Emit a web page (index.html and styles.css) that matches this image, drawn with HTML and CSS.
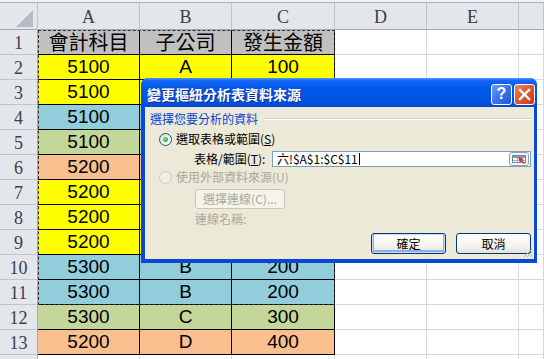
FILE: index.html
```html
<!DOCTYPE html>
<html>
<head>
<meta charset="utf-8">
<link rel="stylesheet" href="styles.css">
</head>
<body>
<div class="sheet">
  <div class="strip"></div>
  <div class="grid">
    <div class="corner"><svg width="38" height="27" viewBox="0 0 38 27"><polygon points="33,7 33,24 16,24" fill="#B7BBC1"/></svg></div>
    <div class="ch">A</div><div class="ch">B</div><div class="ch">C</div><div class="ch">D</div><div class="ch">E</div><div class="ch"></div>

    <div class="rh">1</div><div class="d h cjk">會計科目</div><div class="d h cjk">子公司</div><div class="d h cjk">發生金額</div><div class="c"></div><div class="c"></div><div class="c"></div>
    <div class="rh">2</div><div class="d y">5100</div><div class="d y">A</div><div class="d y">100</div><div class="c"></div><div class="c"></div><div class="c"></div>
    <div class="rh">3</div><div class="d y">5100</div><div class="d y"></div><div class="d y"></div><div class="c"></div><div class="c"></div><div class="c"></div>
    <div class="rh">4</div><div class="d b">5100</div><div class="d b"></div><div class="d b"></div><div class="c"></div><div class="c"></div><div class="c"></div>
    <div class="rh">5</div><div class="d g">5100</div><div class="d g"></div><div class="d g"></div><div class="c"></div><div class="c"></div><div class="c"></div>
    <div class="rh">6</div><div class="d o">5200</div><div class="d o"></div><div class="d o"></div><div class="c"></div><div class="c"></div><div class="c"></div>
    <div class="rh">7</div><div class="d y">5200</div><div class="d y"></div><div class="d y"></div><div class="c"></div><div class="c"></div><div class="c"></div>
    <div class="rh">8</div><div class="d y">5200</div><div class="d y"></div><div class="d y"></div><div class="c"></div><div class="c"></div><div class="c"></div>
    <div class="rh">9</div><div class="d y">5200</div><div class="d y"></div><div class="d y"></div><div class="c"></div><div class="c"></div><div class="c"></div>
    <div class="rh">10</div><div class="d b">5300</div><div class="d b">B</div><div class="d b">200</div><div class="c"></div><div class="c"></div><div class="c"></div>
    <div class="rh">11</div><div class="d b">5300</div><div class="d b">B</div><div class="d b">200</div><div class="c"></div><div class="c"></div><div class="c"></div>
    <div class="rh">12</div><div class="d g">5300</div><div class="d g">C</div><div class="d g">300</div><div class="c"></div><div class="c"></div><div class="c"></div>
    <div class="rh">13</div><div class="d o">5200</div><div class="d o">D</div><div class="d o">400</div><div class="c"></div><div class="c"></div><div class="c"></div>
    <div class="rh"></div><div class="c"></div><div class="c"></div><div class="c"></div><div class="c"></div><div class="c"></div><div class="c"></div>
  </div>

  <div class="ants"></div>

  <div class="dialog">
    <div class="titlebar">
      <div class="title">變更樞紐分析表資料來源</div>
      <div class="tbtn help">?</div>
      <div class="tbtn close"><svg width="13" height="13" viewBox="0 0 13 13"><path d="M2 2 L11 11 M11 2 L2 11" stroke="#fff" stroke-width="2.4" stroke-linecap="square"/></svg></div>
    </div>
    <div class="body">
      <div class="group">
        <span class="glabel">選擇您要分析的資料</span>
        <span class="gline"></span>
      </div>
      <div class="radio-row">
        <span class="radio on"><span class="dot"></span></span>
        <span>選取表格或範圍(<u>S</u>)</span>
      </div>
      <div class="range-row">
        <span class="rlabel">表格/範圍(<u>T</u>):</span>
        <div class="input">
          <span class="itext">六!$A$1:$C$11<span class="caret"></span></span>
          <span class="rbtn"><svg width="20" height="14" viewBox="0 0 20 14">
            <rect x="0.5" y="0.5" width="19" height="13" rx="2" fill="#F3F2EC" stroke="#8FA3BF"/>
            <rect x="3.5" y="3.5" width="13" height="7" fill="#fff" stroke="#6C86AE"/>
            <rect x="4" y="4" width="12" height="2" fill="#7D9AC6"/>
            <path d="M4 8.5 H16 M8.5 6 V10.5 M12.5 6 V10.5" stroke="#9BB0CF" stroke-width="1"/>
            <polygon points="9,5 15,7 13,8 16,11 15,12 12,9 11,11" fill="#D8311C"/>
          </svg></span>
        </div>
      </div>
      <div class="radio-row dis">
        <span class="radio off"></span>
        <span>使用外部資料來源(U)</span>
      </div>
      <div class="conn-row">
        <span class="btn disabled">選擇連線(C)...</span>
      </div>
      <div class="name-row">連線名稱:</div>
      <div class="footer">
        <span class="btn default">確定</span>
        <span class="btn">取消</span>
      </div>
      <svg class="grip" width="10" height="10" viewBox="0 0 10 10"><path d="M9 1 L1 9 M9 4 L4 9 M9 7 L7 9" stroke="#B5B19E" stroke-width="1"/></svg>
    </div>
  </div>
</div>
</body>
</html>
```

FILE: styles.css
```css
html, body {
  margin: 0;
  padding: 0;
}
body {
  width: 544px;
  height: 359px;
  overflow: hidden;
  background: #fff;
}
.sheet {
  position: relative;
  width: 544px;
  height: 359px;
  overflow: hidden;
}
.strip {
  height: 2px;
  background: #F0F1F3;
  border-bottom: 1px solid #AAB0B8;
}
.grid {
  display: grid;
  grid-template-columns: 38px 102px 92px 103px 92px 92px 25px;
  grid-template-rows: 27px;
  grid-auto-rows: 25px;
}
.grid > div {
  box-sizing: border-box;
}
.corner {
  background: #E3E6EA;
  border-right: 1px solid #BFC4CA;
  border-bottom: 1px solid #A3A9B1;
}
.corner svg { display: block; }
.ch {
  background: #E3E6EA;
  border-right: 1px solid #BFC4CA;
  border-bottom: 1px solid #A3A9B1;
  font-family: "Liberation Serif", serif;
  font-size: 18px;
  color: #3A3F48;
  display: flex;
  align-items: flex-end;
  justify-content: center;
  padding-bottom: 1px;
}
.rh {
  background: #E3E6EA;
  border-right: 1px solid #A3A9B1;
  border-bottom: 1px solid #BFC4CA;
  font-family: "Liberation Serif", serif;
  font-size: 18px;
  color: #3A3F48;
  display: flex;
  align-items: flex-end;
  justify-content: center;
  line-height: 20px;
  padding-bottom: 1px;
}
.c {
  border-right: 1px solid #D6D8DB;
  border-bottom: 1px solid #D6D8DB;
}
.d {
  border-right: 1px solid #000;
  border-bottom: 1px solid #000;
  font-family: "Liberation Sans", Arial, sans-serif;
  font-size: 19px;
  color: #000;
  display: flex;
  align-items: center;
  justify-content: center;
  line-height: 22px;
}
.d.cjk {
  font-family: "Noto Sans CJK TC", "Liberation Sans", sans-serif;
  font-size: 20px;
  line-height: 24px;
}
.h { background: #C0C0C0; }
.y { background: #FFFF00; }
.b { background: #92CDDC; }
.g { background: #C4D79B; }
.o { background: #FABF8F; }

.ants {
  position: absolute;
  left: 38px;
  top: 30px;
  width: 297px;
  height: 275px;
  box-sizing: border-box;
  border: 1px dashed #3A2A2A;
  pointer-events: none;
}

/* dialog */
.dialog {
  position: absolute;
  left: 141px;
  top: 78px;
  width: 396px;
  height: 185px;
  box-sizing: border-box;
  background: #0A47D6;
  border-radius: 7px 7px 0 0;
  display: flex;
  flex-direction: column;
  overflow: hidden;
  font-family: "Noto Sans CJK TC", "Liberation Sans", sans-serif;
  font-size: 12px;
}
.titlebar {
  height: 29px;
  box-sizing: border-box;
  padding: 3px 2px 0 6px;
  display: flex;
  align-items: center;
  gap: 2px;
  background: linear-gradient(to bottom, #4A9BFF 0%, #1566F2 9%, #0058E8 35%, #0054E3 75%, #0050DC 90%, #0146D0 100%);
}
.title {
  flex: 1;
  color: #fff;
  font-weight: bold;
  font-size: 14px;
  line-height: 18px;
  text-shadow: 1px 1px 0 #0A2A9A;
}
.tbtn {
  width: 21px;
  height: 21px;
  box-sizing: border-box;
  border: 1px solid #fff;
  border-radius: 3px;
  display: flex;
  align-items: center;
  justify-content: center;
}
.help {
  background: linear-gradient(135deg, #6CA0FB 0%, #3A72EA 50%, #2458D8 100%);
  color: #fff;
  font-family: "Liberation Sans", Arial, sans-serif;
  font-weight: bold;
  font-size: 16px;
  line-height: 16px;
}
.close {
  background: linear-gradient(135deg, #F0855E 0%, #E05A32 45%, #C73A17 100%);
}
.close svg { display: block; }

.body {
  position: relative;
  flex: 1;
  margin: 0 3px 4px 4px;
  background: #ECE9D8;
  padding: 5px 3px 0 5px;
  box-sizing: border-box;
  color: #000;
}
.group {
  display: flex;
  align-items: center;
  height: 14px;
}
.glabel {
  color: #0046D5;
  line-height: 14px;
  white-space: nowrap;
}
.gline {
  flex: 1;
  margin-left: 6px;
  height: 0;
  border-top: 1px solid #D0D0BF;
  border-bottom: 1px solid #fff;
}
.radio-row {
  display: flex;
  align-items: center;
  height: 14px;
  margin-top: 6px;
  padding-left: 9px;
  gap: 4px;
  line-height: 14px;
}
.radio {
  width: 13px;
  height: 13px;
  box-sizing: border-box;
  border-radius: 50%;
  display: flex;
  align-items: center;
  justify-content: center;
}
.radio.on {
  border: 1px solid #1C5180;
  background: linear-gradient(135deg, #DCDBD3 0%, #F6F6F3 60%, #fff 100%);
}
.radio .dot {
  width: 5px;
  height: 5px;
  border-radius: 50%;
  background: radial-gradient(circle at 40% 40%, #6FE06F, #21A121);
}
.radio.off {
  border: 1px solid #CAC8BB;
  background: #F0EFE6;
}
.radio-row.dis {
  color: #ACA899;
  margin-top: 3px;
}
.range-row {
  display: flex;
  align-items: center;
  height: 16px;
  margin-top: 5px;
  padding-left: 44px;
}
.rlabel {
  width: 78px;
  line-height: 14px;
  white-space: nowrap;
}
.input {
  flex: 1;
  height: 16px;
  box-sizing: border-box;
  border: 1px solid #7F9DB9;
  background: #fff;
  display: flex;
  align-items: center;
  justify-content: space-between;
  padding: 0 1px 0 4px;
}
.itext {
  line-height: 14px;
  display: flex;
  align-items: center;
}
.caret {
  display: inline-block;
  width: 1px;
  height: 12px;
  background: #000;
  margin-left: 1px;
}
.rbtn svg { display: block; }
.conn-row {
  margin-top: 5px;
  padding-left: 45px;
  height: 20px;
  display: flex;
}
.btn {
  display: flex;
  align-items: center;
  justify-content: center;
  box-sizing: border-box;
  height: 20px;
  border: 1px solid #003C74;
  border-radius: 3px;
  background: linear-gradient(to bottom, #FFFFFF 0%, #F5F4EF 60%, #E3E1D8 100%);
  line-height: 14px;
  white-space: nowrap;
}
.btn.disabled {
  width: 90px;
  border-color: #C9C7BA;
  background: #F5F4EA;
  color: #ACA899;
}
.btn.default {
  box-shadow: inset 0 0 0 1px #C8DAF8, inset 0 -1px 0 2px #8CAEEB;
}
.name-row {
  margin-top: 3px;
  padding-left: 45px;
  height: 14px;
  line-height: 14px;
  color: #ACA899;
}
.footer {
  margin-top: 7px;
  display: flex;
  justify-content: flex-end;
  gap: 10px;
}
.footer .btn {
  width: 75px;
  height: 21px;
}
.grip {
  position: absolute;
  right: 1px;
  bottom: 1px;
}
```
